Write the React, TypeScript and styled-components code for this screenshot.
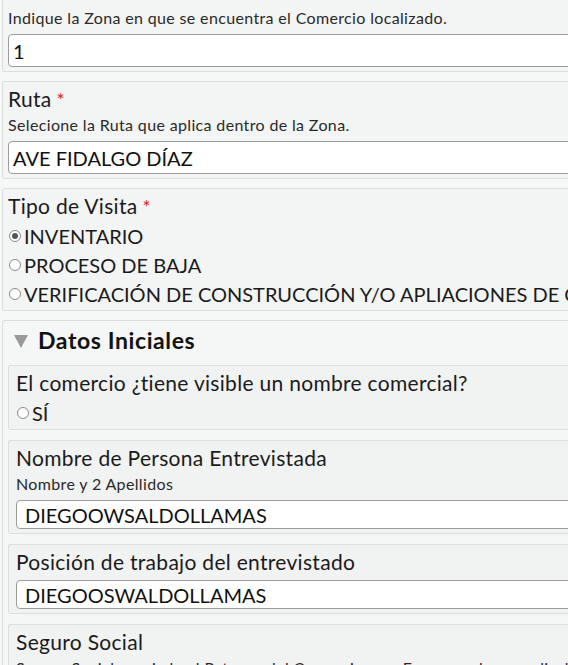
import React from "react";
import styled, { createGlobalStyle } from "styled-components";

const GlobalStyle = createGlobalStyle`
  html, body {
    margin: 0;
    padding: 0;
    background: #f6f7f7;
    overflow: hidden;
  }
  body {
    font-family: Lato, "Noto Sans", "Liberation Sans", sans-serif;
    color: #1b1b1b;
  }
`;

const Form = styled.form`
  width: 660px;
  margin-top: -26px;
  padding-left: 2px;
  display: flex;
  flex-direction: column;
  gap: 9px;
`;

const Field = styled.div<{ $inner?: boolean; $choices?: boolean }>`
  border: 1px solid #dcdddd;
  border-radius: 2px;
  background: ${(p) => (p.$inner ? "#f1f2f2" : "#f3f4f4")};
  padding-top: 4px;
  padding-bottom: ${(p) => (p.$choices ? "2px" : "4px")};
  padding-left: ${(p) => (p.$inner ? "7px" : "5px")};
  padding-right: 5px;
  display: flex;
  flex-direction: column;
`;

const Label = styled.div`
  font-size: 21px;
  line-height: 26px;
  height: 26px;
  letter-spacing: 0.3px;
  color: #1b1b1b;
  white-space: nowrap;
`;

const Required = styled.span`
  color: #e2231a;
  margin-left: 5px;
  font-size: 19px;
  line-height: 0;
`;

const Hint = styled.div`
  font-size: 16px;
  line-height: 25px;
  height: 25px;
  letter-spacing: 0.35px;
  color: #2a2a2a;
  white-space: nowrap;
`;

const TextInput = styled.input<{ $small?: boolean; $gap?: number }>`
  box-sizing: border-box;
  height: ${(p) => (p.$small ? "29px" : "33px")};
  margin-top: ${(p) => p.$gap ?? 4}px;
  border: 1px solid #9c9c9c;
  border-radius: 4px;
  background: #fff;
  font-family: inherit;
  font-size: 20px;
  color: #111;
  padding: ${(p) => (p.$small ? "0 8px" : "0 4px")};
  outline: none;
`;

const RadioGroup = styled.div`
  margin-top: 2px;
  display: flex;
  flex-direction: column;
`;

const RadioRow = styled.label`
  display: flex;
  align-items: center;
  height: 29px;
  font-size: 20px;
  color: #1b1b1b;
  white-space: nowrap;
`;

const RadioDot = styled.span<{ $checked?: boolean }>`
  box-sizing: border-box;
  width: 12px;
  height: 12px;
  border-radius: 50%;
  border: 1px solid #8a8a8a;
  background: #fff;
  margin: 0 3px 0 1px;
  display: flex;
  align-items: center;
  justify-content: center;
  flex: none;
  &::after {
    content: "";
    width: 6px;
    height: 6px;
    border-radius: 50%;
    background: ${(p) => (p.$checked ? "#555" : "transparent")};
  }
`;

const Section = styled.div`
  border: 1px solid #dcdddd;
  border-radius: 2px;
  background: #f5f6f6;
  padding-left: 5px;
  display: flex;
  flex-direction: column;
`;

const SectionHeader = styled.div`
  display: flex;
  align-items: center;
  height: 44px;
  box-sizing: border-box;
  padding: 0 0 6px 6px;
  gap: 10px;
`;

const Caret = styled.svg`
  width: 14px;
  height: 13px;
  flex: none;
  margin-top: 2px;
`;

const SectionTitle = styled.h2`
  margin: 0;
  font-size: 23px;
  font-weight: 700;
  letter-spacing: 0.6px;
  color: #111;
`;

const SectionBody = styled.div`
  display: flex;
  flex-direction: column;
  gap: 10px;
`;

const Radio = ({ checked, children }: { checked?: boolean; children: React.ReactNode }) => (
  <RadioRow>
    <RadioDot $checked={checked} />
    {children}
  </RadioRow>
);

export default function App() {
  return (
    <>
      <GlobalStyle />
      <Form>
        <Field>
          <Label>
            Zona<Required>*</Required>
          </Label>
          <Hint>Indique la Zona en que se encuentra el Comercio localizado.</Hint>
          <TextInput defaultValue="1" />
        </Field>

        <Field>
          <Label>
            Ruta<Required>*</Required>
          </Label>
          <Hint>Selecione la Ruta que aplica dentro de la Zona.</Hint>
          <TextInput defaultValue="AVE FIDALGO DÍAZ" />
        </Field>

        <Field $choices>
          <Label>
            Tipo de Visita<Required>*</Required>
          </Label>
          <RadioGroup>
            <Radio checked>INVENTARIO</Radio>
            <Radio>PROCESO DE BAJA</Radio>
            <Radio>VERIFICACIÓN DE CONSTRUCCIÓN Y/O APLIACIONES DE COMERCIOS</Radio>
          </RadioGroup>
        </Field>

        <Section>
          <SectionHeader>
            <Caret viewBox="0 0 14 13">
              <path d="M0 0 H14 L7 13 Z" fill="#9a9a9a" />
            </Caret>
            <SectionTitle>Datos Iniciales</SectionTitle>
          </SectionHeader>

          <SectionBody>
            <Field $inner $choices>
              <Label>El comercio ¿tiene visible un nombre comercial?</Label>
              <RadioGroup>
                <Radio>SÍ</Radio>
              </RadioGroup>
            </Field>

            <Field $inner>
              <Label>Nombre de Persona Entrevistada</Label>
              <Hint>Nombre y 2 Apellidos</Hint>
              <TextInput $small defaultValue="DIEGOOWSALDOLLAMAS" />
            </Field>

            <Field $inner>
              <Label>Posición de trabajo del entrevistado</Label>
              <TextInput $small $gap={5} defaultValue="DIEGOOSWALDOLLAMAS" />
            </Field>

            <Field $inner>
              <Label>Seguro Social</Label>
              <Hint>Seguro Social asociado al Patrono del Comercio o su Empresa, de ser aplicable.</Hint>
              <TextInput $small />
            </Field>
          </SectionBody>
        </Section>
      </Form>
    </>
  );
}
